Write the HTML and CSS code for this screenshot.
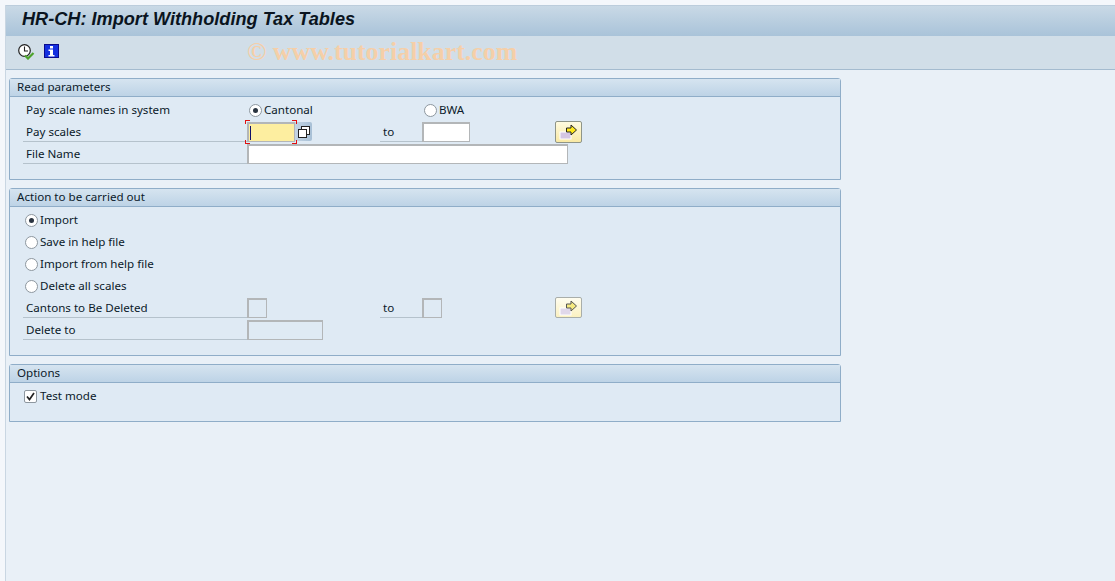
FILE: index.html
```html
<!DOCTYPE html>
<html lang="en">
<head>
<meta charset="utf-8">
<title>HR-CH: Import Withholding Tax Tables</title>
<link rel="stylesheet" href="styles.css">
</head>
<body>
<main class="window">
  <header class="titlebar"><h1>HR-CH: Import Withholding Tax Tables</h1></header>
  <div class="toolbar">
    <svg class="tool" width="17" height="16" viewBox="0 0 17 16">
      <circle cx="6.500" cy="6.500" r="5.800" fill="#fff" stroke="#222" stroke-width="1.200"/>
      <path d="M6.500 2.500v4.500h3.500" fill="none" stroke="#222" stroke-width="1.100"/>
      <path d="M7 11.500l3 3 5.500-5.500" fill="none" stroke="#4da32b" stroke-width="2.200"/>
    </svg>
    <svg class="tool" width="15" height="14" viewBox="0 0 15 14">
      <rect width="15" height="14" fill="#0a0a8c"/>
      <rect x="1" y="1" width="13" height="12" fill="#1430e0"/>
      <path d="M6 2h3v2.500h-3zM4.500 5.500h4.500v5.500h1.500v1.500h-6v-1.500h1.500v-4h-1.500z" fill="#fff"/>
    </svg>
  </div>
  <div class="watermark">© www.tutorialkart.com</div>
  <div class="content">
    <section class="group">
      <h2>Read parameters</h2>
      <div class="body">
        <div class="row">
          <span class="label plain">Pay scale names in system</span>
          <label class="radio cantonal"><i class="dot on"></i>Cantonal</label>
          <label class="radio"><i class="dot"></i>BWA</label>
        </div>
        <div class="row">
          <span class="label">Pay scales</span>
          <span class="focus-field">
            <span class="input required w48"><i class="caret"></i></span>
            <i class="corner tl"></i><i class="corner tr"></i><i class="corner bl"></i><i class="corner br"></i>
          </span>
          <span class="copy">
            <svg width="14" height="14" viewBox="0 0 14 14"><rect x="4.500" y="1.500" width="8" height="8" fill="#fff" stroke="#222"/><rect x="1.500" y="4.500" width="8" height="8" fill="#fff" stroke="#222"/></svg>
          </span>
          <span class="to gap-first">to</span>
          <span class="input w48"></span>
          <button class="arrow gap-a" type="button">
            <svg width="20" height="16" viewBox="0 0 20 16"><rect x="1" y="8" width="11" height="7" fill="#d4c6e4" stroke="#fff"/><path d="M7.500 4h4.500v-3l5.500 5-5.500 5v-3h-4.500z" fill="#ffe81a" stroke="#222"/></svg>
          </button>
        </div>
        <div class="row">
          <span class="label">File Name</span>
          <span class="input w320"></span>
        </div>
      </div>
    </section>
    <section class="group">
      <h2>Action to be carried out</h2>
      <div class="body">
        <div class="row"><label class="radio opt"><i class="dot on"></i>Import</label></div>
        <div class="row"><label class="radio opt"><i class="dot"></i>Save in help file</label></div>
        <div class="row"><label class="radio opt"><i class="dot"></i>Import from help file</label></div>
        <div class="row"><label class="radio opt"><i class="dot"></i>Delete all scales</label></div>
        <div class="row">
          <span class="label">Cantons to Be Deleted</span>
          <span class="input off w20"></span>
          <span class="to gap-second">to</span>
          <span class="input off w20"></span>
          <button class="arrow off gap-b" type="button">
            <svg width="20" height="16" viewBox="0 0 20 16"><rect x="1" y="8" width="11" height="7" fill="#e0d8ea" stroke="#fff"/><path d="M7.500 4h4.500v-3l5.500 5-5.500 5v-3h-4.500z" fill="#f6ea80" stroke="#555"/></svg>
          </button>
        </div>
        <div class="row">
          <span class="label">Delete to</span>
          <span class="input off w76"></span>
        </div>
      </div>
    </section>
    <section class="group">
      <h2>Options</h2>
      <div class="body">
        <div class="row">
          <label class="radio tick"><i class="check"><svg width="9" height="9" viewBox="0 0 9 9"><path d="M1 4.500l2.500 3L8 1" fill="none" stroke="#222" stroke-width="1.700"/></svg></i>Test mode</label>
        </div>
      </div>
    </section>
  </div>
</main>
</body>
</html>
```
FILE: styles.css
```css
* { box-sizing: border-box; }
html, body { margin: 0; height: 100%; }
body {
  background: #f4f7fb;
  font-family: "Noto Sans", sans-serif;
  font-size: 11.600px;
  color: #0b1a2a;
  overflow: hidden;
}
.window {
  position: relative;
  margin: 5px 0 0 5px;
  height: 576px;
  background: #e9f0f7;
  border-left: 1px solid #c9d6e2;
}
.titlebar {
  height: 31px;
  background: linear-gradient(#c9d9e6, #a9c3d9);
  display: flex;
  align-items: center;
  padding: 0 0 4px 16px;
  border-top: 1px solid #bccddc;
}
.titlebar h1 {
  margin: 0;
  font: italic bold 18.150px "Liberation Sans", sans-serif;
  color: #0a1420;
}
.toolbar {
  height: 34px;
  background: #d1dee8;
  border-bottom: 1px solid #a4bbcf;
  display: flex;
  align-items: flex-start;
  gap: 9px;
  padding: 8px 0 0 12px;
}
.watermark {
  position: absolute;
  left: 241px;
  top: 32px;
  font: bold 25.900px "Liberation Serif", serif;
  color: #f5cfa8;
  white-space: nowrap;
}
.content {
  padding: 8px 0 0 3px;
  width: 835px;
  display: flex;
  flex-direction: column;
  gap: 8px;
}
.group {
  border: 1px solid #8fadc8;
  border-radius: 3px 3px 0 0;
  background: #dfeaf4;
}
.group h2 {
  margin: 0;
  height: 18px;
  line-height: 15px;
  padding-left: 7px;
  font-size: 11.600px;
  font-weight: normal;
  background: linear-gradient(#d6e4f0, #bdd3e6);
  border-bottom: 1px solid #8fadc8;
}
.body { padding: 1px 0 15px 13px; }
.row {
  height: 22px;
  display: flex;
  align-items: flex-end;
}
.label {
  width: 224px;
  height: 22px;
  line-height: 24px;
  padding-left: 3px;
  border-bottom: 1px solid #b5c2cc;
  flex: none;
}
.label.plain { border-bottom: 0; }
.radio { display: flex; align-items: center; white-space: nowrap; height: 22px; }
.radio.cantonal { width: 175px; margin-left: 2px; }
.radio.opt { margin-left: 2px; }
.radio.tick { margin-left: 1px; }
.dot {
  width: 13px;
  height: 13px;
  margin: 2px 2px 0 0;
  border-radius: 50%;
  border: 1px solid #8d979f;
  background: #fff;
  display: flex;
  align-items: center;
  justify-content: center;
  flex: none;
}
.dot.on::after {
  content: "";
  width: 5px;
  height: 5px;
  border-radius: 50%;
  background: #2a3440;
}
.check {
  width: 13px;
  height: 13px;
  margin: 2px 3px 0 0;
  border: 1px solid #8d979f;
  border-radius: 2px;
  background: #fff;
  display: flex;
  align-items: center;
  justify-content: center;
  flex: none;
}
.input {
  height: 20px;
  display: block;
  flex: none;
  background: #fff;
  border: 2px solid #b3b6b8;
  border-right-width: 1px;
  border-bottom-width: 1px;
}
.input.off { background: #dfeaf4; }
.required { background: #fdeea0; display: flex; align-items: center; padding-left: 1px; }
.caret { width: 1px; height: 14px; background: #10106a; }
.w20 { width: 20px; }
.w48 { width: 48px; }
.w76 { width: 76px; }
.w320 { width: 321px; }
.focus-field { position: relative; display: block; flex: none; }
.corner { position: absolute; width: 5px; height: 4px; border: 0 solid #e01010; }
.tl { left: -2px; top: -2px; border-width: 1px 0 0 1px; }
.tr { right: -2px; top: -2px; border-width: 1px 1px 0 0; }
.bl { left: -2px; bottom: -2px; border-width: 0 0 1px 1px; }
.br { right: -2px; bottom: -2px; border-width: 0 1px 1px 0; }
.copy {
  width: 17px;
  height: 19px;
  background: linear-gradient(90deg, #c3d4e4, #a8c0d6);
  display: flex;
  align-items: center;
  justify-content: center;
  border-radius: 0 2px 2px 0;
  margin-bottom: 1px;
  flex: none;
}
.to {
  width: 42px;
  height: 22px;
  line-height: 24px;
  padding-left: 3px;
  border-bottom: 1px solid #b5c2cc;
  flex: none;
}
.gap-first { margin-left: 68px; }
.gap-second { margin-left: 113px; }
.arrow {
  width: 27px;
  height: 22px;
  padding: 0;
  align-self: flex-start;
  margin-top: 1px;
  background: linear-gradient(#fffbe0, #f9e9a4);
  border: 1px solid #8f9588;
  border-radius: 2px;
  display: flex;
  align-items: center;
  justify-content: center;
  flex: none;
}
.arrow.off { height: 21px; border-color: #a9aeaa; background: linear-gradient(#fffdf0, #fbf1c0); }
.gap-a { margin-left: 85px; }
.gap-b { margin-left: 113px; }
```
